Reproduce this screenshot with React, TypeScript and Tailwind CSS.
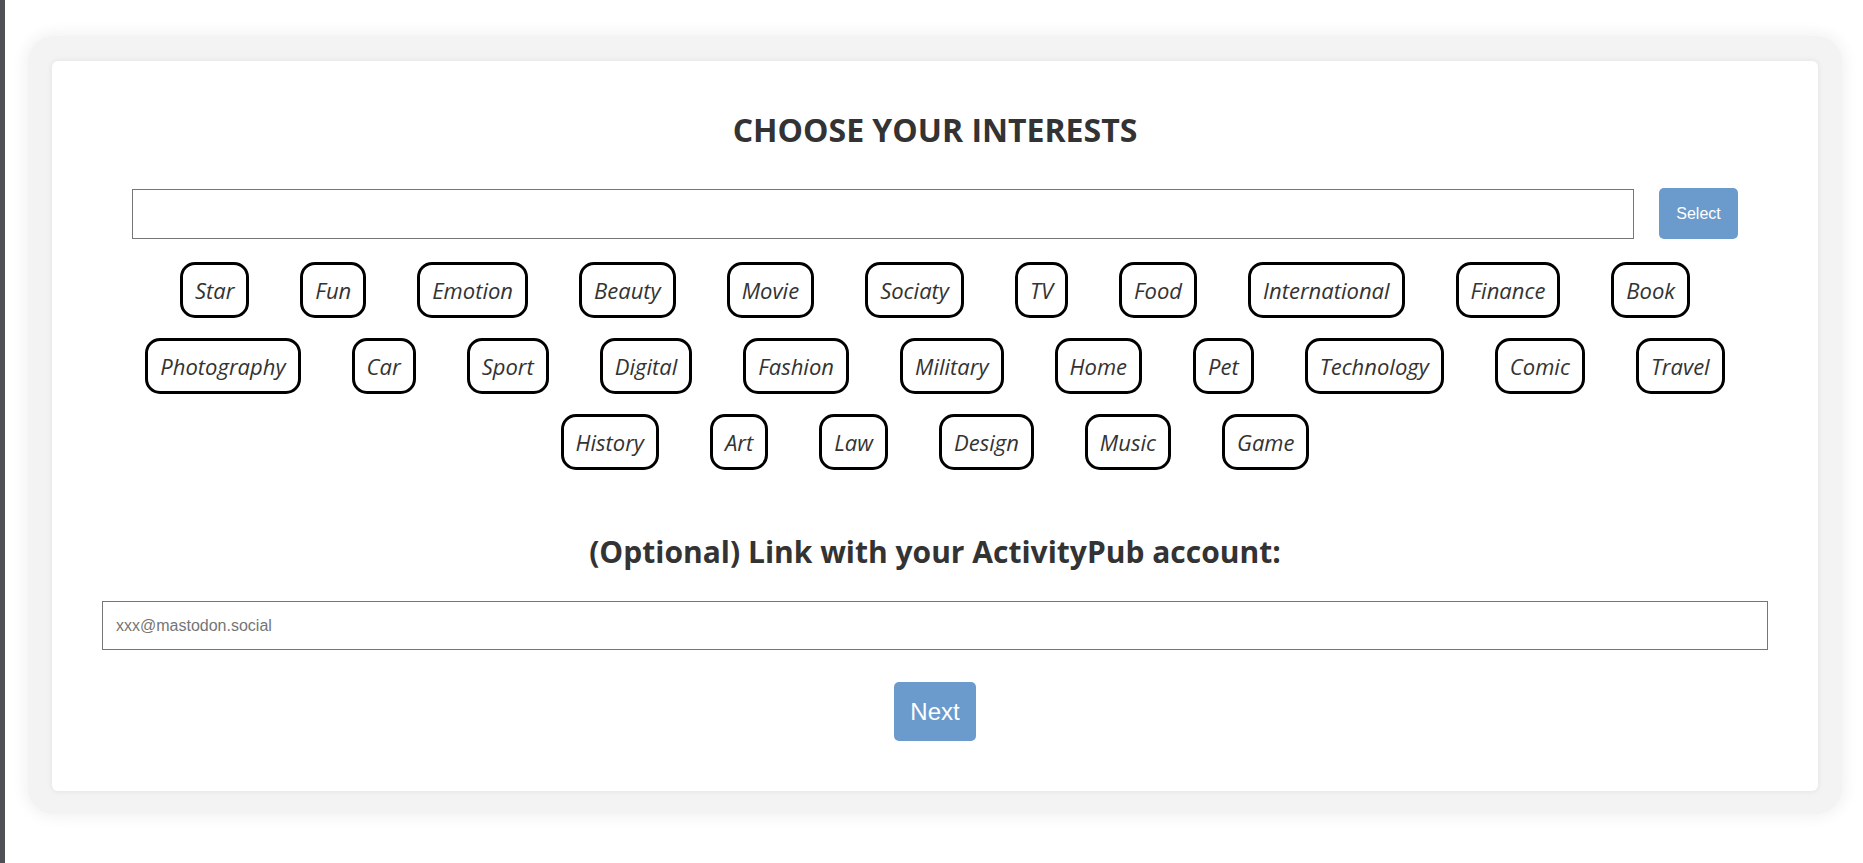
import React from 'react'

const rows: string[][] = [
  ['Star', 'Fun', 'Emotion', 'Beauty', 'Movie', 'Sociaty', 'TV', 'Food', 'International', 'Finance', 'Book'],
  ['Photography', 'Car', 'Sport', 'Digital', 'Fashion', 'Military', 'Home', 'Pet', 'Technology', 'Comic', 'Travel'],
  ['History', 'Art', 'Law', 'Design', 'Music', 'Game'],
]

const Tag = ({ label }: { label: string }) => {
  return (
    <button className="flex h-[56px] items-center rounded-[15px] border-[3px] border-black bg-white px-[12px] text-[22px] italic text-[#333] font-['Open_Sans',sans-serif]">
      {label}
    </button>
  )
}

export default function App() {
  return (
    <div className="flex min-h-screen bg-white">
      <div className="w-[5px] shrink-0 bg-[#4f5056]" />
      <div className="pl-[23px] pr-[21px] pt-[36px] pb-[40px] flex-1">
        <div className="rounded-[26px] bg-[#f3f3f3] px-[24px] pt-[25px] pb-[23px] shadow-[0_0_14px_4px_#f3f3f3]">
          <div className="rounded-md bg-white px-[50px] pt-[49px] pb-[50px] shadow-[0_0_6px_rgba(0,0,0,0.08)] font-['Open_Sans',sans-serif]">
            <h1 className="text-center text-[32px] leading-[40px] font-bold text-[#333]">CHOOSE YOUR INTERESTS</h1>

            <div className="mt-[38px] flex items-center gap-[25px] px-[30px]">
              <input type="text" className="h-[50px] flex-1 border border-[#767676] bg-white px-2 outline-none" />
              <button className="h-[51px] w-[79px] rounded-[5px] bg-[#6a9bcc] text-[16px] text-white font-['Liberation_Sans',Arial,sans-serif]">
                Select
              </button>
            </div>

            <div className="mt-[23px] flex flex-col gap-[20px]">
              {rows.map((row, i) => (
                <div key={i} className="flex justify-center gap-[51px]">
                  {row.map((t) => (
                    <Tag key={t} label={t} />
                  ))}
                </div>
              ))}
            </div>

            <h2 className="mt-[62px] text-center text-[30px] leading-[40px] font-bold text-[#333]">
              (Optional) Link with your ActivityPub account:
            </h2>

            <input
              type="text"
              placeholder="xxx@mastodon.social"
              className="mt-[29px] block h-[49px] w-full border border-[#767676] bg-white px-[13px] text-[16px] text-[#333] placeholder:text-[#757575] outline-none font-['Liberation_Sans',Arial,sans-serif]"
            />

            <div className="mt-[32px] flex justify-center">
              <button className="h-[59px] w-[82px] rounded-[5px] bg-[#6a9bcc] text-[24px] text-white font-['Liberation_Sans',Arial,sans-serif]">
                Next
              </button>
            </div>
          </div>
        </div>
      </div>
    </div>
  )
}
